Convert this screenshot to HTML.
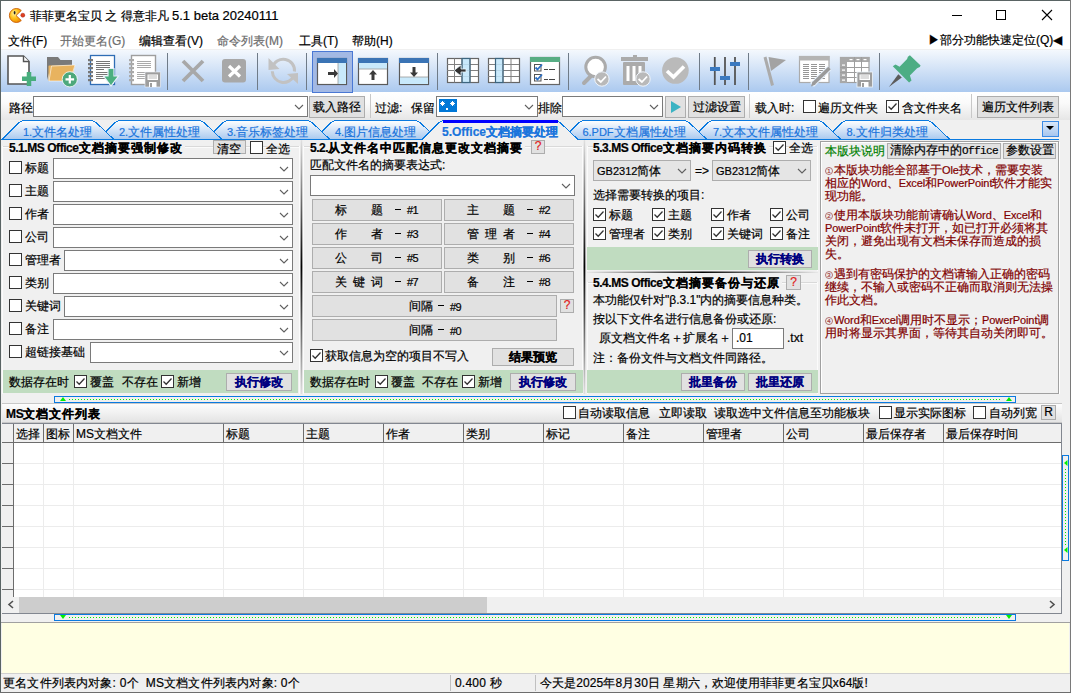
<!DOCTYPE html><html><head><meta charset="utf-8"><style>
*{margin:0;padding:0;box-sizing:border-box}
html,body{width:1071px;height:693px;overflow:hidden;background:#f0f0f0}
body{position:relative;font-family:"Liberation Sans",sans-serif;font-size:12px;color:#000}
div{position:absolute}
.t{line-height:16px;white-space:nowrap;-webkit-text-stroke:0.2px currentColor}
</style></head><body><div style="left:0px;top:0px;width:1071px;height:693px;background:#f0f0f0"></div><div style="left:1px;top:1px;width:1069px;height:29px;background:#fff"></div><div style="left:1px;top:30px;width:1069px;height:19px;background:#fff"></div><div style="left:1px;top:49px;width:1069px;height:1px;background:#f0f0f0"></div><div style="left:1px;top:50px;width:1069px;height:42px;background:linear-gradient(#f4f8fd,#abc9ef)"></div><div style="left:1px;top:92px;width:1069px;height:28px;background:linear-gradient(#ffffff,#fafafa 40%,#e6e6e6)"></div><div class="t" style="left:30px;top:8px;color:#000">菲菲更名宝贝 之 得意非凡 <span style="font-size:13px">5.1 beta 20240111</span></div><div class="t" style="left:8px;top:33px;color:#000">文件(F)</div><div class="t" style="left:60px;top:33px;color:#6d6d6d">开始更名(G)</div><div class="t" style="left:139px;top:33px;color:#000">编辑查看(V)</div><div class="t" style="left:217px;top:33px;color:#6d6d6d">命令列表(M)</div><div class="t" style="left:299px;top:33px;color:#000">工具(T)</div><div class="t" style="left:352px;top:33px;color:#000">帮助(H)</div><div class="t" style="left:928px;top:32px;color:#000">▶部分功能快速定位(Q)◀</div><svg style="position:absolute;left:0;top:0" width="1071" height="693"><line x1="952" y1="15.5" x2="962" y2="15.5" stroke="#000" stroke-width="1"/><rect x="996.5" y="10.5" width="9" height="9" fill="none" stroke="#000" stroke-width="1"/><path d="M1042 10 L1052 20 M1052 10 L1042 20" stroke="#000" stroke-width="1.1"/></svg><div class="t" style="left:9px;top:100px;">路径</div><div style="left:33px;top:96px;width:275px;height:21px;background:#fff;border:1px solid #7a7a7a"></div><svg style="position:absolute;left:294px;top:104px" width="10" height="6"><path d="M1 1 L5 5 L9 1" fill="none" stroke="#606060" stroke-width="1.1"/></svg><div style="left:309px;top:96px;width:56px;height:22px;background:#e1e1e1;border:1px solid #adadad"></div><div class="t" style="left:309px;top:96px;width:56px;height:22px;line-height:22px;text-align:center;">载入路径</div><div style="left:370px;top:94px;width:1px;height:24px;background:#c8c8c8"></div><div class="t" style="left:375px;top:100px;">过滤:</div><div class="t" style="left:411px;top:100px;">保留</div><div style="left:436px;top:96px;width:102px;height:21px;background:#fff;border:1px solid #7a7a7a"></div><svg style="position:absolute;left:524px;top:104px" width="10" height="6"><path d="M1 1 L5 5 L9 1" fill="none" stroke="#606060" stroke-width="1.1"/></svg><div style="left:439px;top:99px;width:18px;height:13px;background:#0078d7"></div><svg style="position:absolute;left:0;top:0" width="1071" height="693"><g stroke="#fff" stroke-width="1"><path d="M442.5 101 V106 M440 103.5 H445 M440.8 101.8 L444.2 105.2 M444.2 101.8 L440.8 105.2"/><path d="M452.5 101 V106 M450 103.5 H455 M450.8 101.8 L454.2 105.2 M454.2 101.8 L450.8 105.2"/></g><rect x="446" y="108" width="2" height="2" fill="#fff"/></svg><div class="t" style="left:538px;top:100px;">排除</div><div style="left:562px;top:96px;width:101px;height:21px;background:#fff;border:1px solid #7a7a7a"></div><svg style="position:absolute;left:649px;top:104px" width="10" height="6"><path d="M1 1 L5 5 L9 1" fill="none" stroke="#606060" stroke-width="1.1"/></svg><div style="left:665px;top:96px;width:21px;height:22px;background:#e1e1e1;border:1px solid #adadad"></div><svg style="position:absolute;left:669px;top:100px" width="14" height="14"><path d="M2 1 L12 7 L2 13 Z" fill="#3bb3c3"/></svg><div style="left:688px;top:96px;width:57px;height:22px;background:#e1e1e1;border:1px solid #adadad"></div><div class="t" style="left:688px;top:96px;width:57px;height:22px;line-height:22px;text-align:center;">过滤设置</div><div style="left:749px;top:94px;width:1px;height:24px;background:#c8c8c8"></div><div class="t" style="left:755px;top:100px;">载入时:</div><div style="left:803px;top:100px;width:13px;height:13px;background:#fff;border:1px solid #333"></div><div class="t" style="left:818px;top:100px;">遍历文件夹</div><div style="left:886px;top:100px;width:13px;height:13px;background:#fff;border:1px solid #333"></div><svg style="position:absolute;left:886px;top:100px" width="13" height="13"><path d="M2.5 6.5 L5.2 9.2 L10.5 3.5" fill="none" stroke="#333" stroke-width="1.3"/></svg><div class="t" style="left:902px;top:100px;">含文件夹名</div><div style="left:971px;top:94px;width:1px;height:24px;background:#c8c8c8"></div><div style="left:977px;top:96px;width:82px;height:22px;background:#e1e1e1;border:1px solid #adadad"></div><div class="t" style="left:977px;top:96px;width:82px;height:22px;line-height:22px;text-align:center;">遍历文件列表</div><div style="left:1px;top:120px;width:1069px;height:20px;background:#f0f0f0"></div><div style="left:1px;top:139px;width:1058px;height:1px;background:#0a7ae0"></div><svg style="position:absolute;left:0;top:0" width="1071" height="693"><defs><linearGradient id="tg" x1="0" y1="0" x2="0" y2="1"><stop offset="0" stop-color="#ffffff"/><stop offset="1" stop-color="#a9c9ef"/></linearGradient></defs><path d="M825 139.5 L841 123.5 Q844 120.5 849 120.5 L925 120.5 Q930 120.5 933 123.5 L950 139.5 Z" fill="url(#tg)" stroke="#0a7ae0" stroke-width="1" shape-rendering="crispEdges"/></svg><div class="t" style="left:845px;top:124px;width:84px;text-align:center;color:#1a74dc;font-weight:normal"><span style="font-size:11px">8.</span>文件归类处理</div><svg style="position:absolute;left:0;top:0" width="1071" height="693"><defs><linearGradient id="tg" x1="0" y1="0" x2="0" y2="1"><stop offset="0" stop-color="#ffffff"/><stop offset="1" stop-color="#a9c9ef"/></linearGradient></defs><path d="M691 139.5 L707 123.5 Q710 120.5 715 120.5 L816 120.5 Q821 120.5 824 123.5 L841 139.5 Z" fill="url(#tg)" stroke="#0a7ae0" stroke-width="1" shape-rendering="crispEdges"/></svg><div class="t" style="left:711px;top:124px;width:109px;text-align:center;color:#1a74dc;font-weight:normal"><span style="font-size:11px">7.</span>文本文件属性处理</div><svg style="position:absolute;left:0;top:0" width="1071" height="693"><defs><linearGradient id="tg" x1="0" y1="0" x2="0" y2="1"><stop offset="0" stop-color="#ffffff"/><stop offset="1" stop-color="#a9c9ef"/></linearGradient></defs><path d="M562 139.5 L578 123.5 Q581 120.5 586 120.5 L682 120.5 Q687 120.5 690 123.5 L707 139.5 Z" fill="url(#tg)" stroke="#0a7ae0" stroke-width="1" shape-rendering="crispEdges"/></svg><div class="t" style="left:582px;top:124px;width:104px;text-align:center;color:#1a74dc;font-weight:normal"><span style="font-size:11px">6.PDF</span>文档属性处理</div><svg style="position:absolute;left:0;top:0" width="1071" height="693"><defs><linearGradient id="tg" x1="0" y1="0" x2="0" y2="1"><stop offset="0" stop-color="#ffffff"/><stop offset="1" stop-color="#a9c9ef"/></linearGradient></defs><path d="M314 139.5 L330 123.5 Q333 120.5 338 120.5 L413 120.5 Q418 120.5 421 123.5 L438 139.5 Z" fill="url(#tg)" stroke="#0a7ae0" stroke-width="1" shape-rendering="crispEdges"/></svg><div class="t" style="left:334px;top:124px;width:83px;text-align:center;color:#1a74dc;font-weight:normal"><span style="font-size:11px">4.</span>图片信息处理</div><svg style="position:absolute;left:0;top:0" width="1071" height="693"><defs><linearGradient id="tg" x1="0" y1="0" x2="0" y2="1"><stop offset="0" stop-color="#ffffff"/><stop offset="1" stop-color="#a9c9ef"/></linearGradient></defs><path d="M206 139.5 L222 123.5 Q225 120.5 230 120.5 L305 120.5 Q310 120.5 313 123.5 L330 139.5 Z" fill="url(#tg)" stroke="#0a7ae0" stroke-width="1" shape-rendering="crispEdges"/></svg><div class="t" style="left:226px;top:124px;width:83px;text-align:center;color:#1a74dc;font-weight:normal"><span style="font-size:11px">3.</span>音乐标签处理</div><svg style="position:absolute;left:0;top:0" width="1071" height="693"><defs><linearGradient id="tg" x1="0" y1="0" x2="0" y2="1"><stop offset="0" stop-color="#ffffff"/><stop offset="1" stop-color="#a9c9ef"/></linearGradient></defs><path d="M98 139.5 L114 123.5 Q117 120.5 122 120.5 L197 120.5 Q202 120.5 205 123.5 L222 139.5 Z" fill="url(#tg)" stroke="#0a7ae0" stroke-width="1" shape-rendering="crispEdges"/></svg><div class="t" style="left:118px;top:124px;width:83px;text-align:center;color:#1a74dc;font-weight:normal"><span style="font-size:11px">2.</span>文件属性处理</div><svg style="position:absolute;left:0;top:0" width="1071" height="693"><defs><linearGradient id="tg" x1="0" y1="0" x2="0" y2="1"><stop offset="0" stop-color="#ffffff"/><stop offset="1" stop-color="#a9c9ef"/></linearGradient></defs><path d="M2 139.5 L18 123.5 Q21 120.5 26 120.5 L89 120.5 Q94 120.5 97 123.5 L114 139.5 Z" fill="url(#tg)" stroke="#0a7ae0" stroke-width="1" shape-rendering="crispEdges"/></svg><div class="t" style="left:22px;top:124px;width:71px;text-align:center;color:#1a74dc;font-weight:normal"><span style="font-size:11px">1.</span>文件名处理</div><svg style="position:absolute;left:0;top:0" width="1071" height="693"><path d="M422 141 L438 123.5 L561 123.5 L578 141 Z" fill="#f0f0f0"/><path d="M422 139.5 L438 123.5 Q441 120.5 446 120.5 L553 120.5 Q558 120.5 561 123.5 L578 139.5" fill="#f0f0f0" stroke="#0a7ae0" stroke-width="1" shape-rendering="crispEdges"/><path d="M443 121.5 L558 121.5" stroke="#0000ff" stroke-width="3"/></svg><div class="t" style="left:442px;top:124px;width:115px;text-align:center;color:#1a74dc;font-weight:bold">5.Office文档摘要处理</div><div style="left:1042px;top:121px;width:17px;height:16px;background:linear-gradient(#d9e8fa,#a7c6ee);border:1px solid #3b8be6"></div><svg style="position:absolute;left:1046px;top:126px" width="9" height="6"><path d="M0 0 L8 0 L4 4 Z" fill="#000"/></svg><div style="left:1px;top:140px;width:1069px;height:256px;background:#f0f0f0"></div><div style="left:2px;top:146px;width:298px;height:1px;background:#d9d9d9"></div><div style="left:2px;top:147px;width:298px;height:1px;background:#fbfbfb"></div><div style="left:2px;top:146px;width:1px;height:248px;background:#fbfbfb"></div><div style="left:299px;top:146px;width:1px;height:248px;background:#fbfbfb"></div><div style="left:300px;top:140px;width:1px;height:254px;background:linear-gradient(#e6e6e6,#8a8a8a 25%,#000 50%,#8a8a8a 75%,#e6e6e6);opacity:0.45"></div><div style="left:301px;top:140px;width:1px;height:254px;background:linear-gradient(#e0e0e0,#6a6a6a 25%,#000 50%,#6a6a6a 75%,#e0e0e0)"></div><div style="left:302px;top:140px;width:1px;height:254px;background:linear-gradient(#e6e6e6,#8a8a8a 25%,#000 50%,#8a8a8a 75%,#e6e6e6);opacity:0.35"></div><div style="left:583px;top:140px;width:1px;height:254px;background:linear-gradient(#e6e6e6,#8a8a8a 25%,#000 50%,#8a8a8a 75%,#e6e6e6);opacity:0.45"></div><div style="left:584px;top:140px;width:1px;height:254px;background:linear-gradient(#e0e0e0,#6a6a6a 25%,#000 50%,#6a6a6a 75%,#e0e0e0)"></div><div style="left:585px;top:140px;width:1px;height:254px;background:linear-gradient(#e6e6e6,#8a8a8a 25%,#000 50%,#8a8a8a 75%,#e6e6e6);opacity:0.35"></div><div class="t" style="left:9px;top:140px;font-weight:bold;background:#f0f0f0;padding-right:2px;"><span style="letter-spacing:-0.45px">5.1.MS Office</span><span style="letter-spacing:1px">文档摘要强制修改</span></div><div style="left:213px;top:140px;width:33px;height:14px;background:#e1e1e1;border:1px solid #adadad"></div><div class="t" style="left:217px;top:141px;">清空</div><div style="left:250px;top:141px;width:13px;height:13px;background:#fff;border:1px solid #333"></div><div class="t" style="left:266px;top:141px;">全选</div><div style="left:9px;top:161px;width:13px;height:13px;background:#fff;border:1px solid #333"></div><div class="t" style="left:25px;top:160px;">标题</div><div style="left:53px;top:158px;width:240px;height:21px;background:#fff;border:1px solid #7a7a7a"></div><svg style="position:absolute;left:279px;top:166px" width="10" height="6"><path d="M1 1 L5 5 L9 1" fill="none" stroke="#606060" stroke-width="1.1"/></svg><div style="left:9px;top:184px;width:13px;height:13px;background:#fff;border:1px solid #333"></div><div class="t" style="left:25px;top:183px;">主题</div><div style="left:53px;top:181px;width:240px;height:21px;background:#fff;border:1px solid #7a7a7a"></div><svg style="position:absolute;left:279px;top:189px" width="10" height="6"><path d="M1 1 L5 5 L9 1" fill="none" stroke="#606060" stroke-width="1.1"/></svg><div style="left:9px;top:207px;width:13px;height:13px;background:#fff;border:1px solid #333"></div><div class="t" style="left:25px;top:206px;">作者</div><div style="left:53px;top:204px;width:240px;height:21px;background:#fff;border:1px solid #7a7a7a"></div><svg style="position:absolute;left:279px;top:212px" width="10" height="6"><path d="M1 1 L5 5 L9 1" fill="none" stroke="#606060" stroke-width="1.1"/></svg><div style="left:9px;top:230px;width:13px;height:13px;background:#fff;border:1px solid #333"></div><div class="t" style="left:25px;top:229px;">公司</div><div style="left:53px;top:227px;width:240px;height:21px;background:#fff;border:1px solid #7a7a7a"></div><svg style="position:absolute;left:279px;top:235px" width="10" height="6"><path d="M1 1 L5 5 L9 1" fill="none" stroke="#606060" stroke-width="1.1"/></svg><div style="left:9px;top:253px;width:13px;height:13px;background:#fff;border:1px solid #333"></div><div class="t" style="left:25px;top:252px;">管理者</div><div style="left:64px;top:250px;width:229px;height:21px;background:#fff;border:1px solid #7a7a7a"></div><svg style="position:absolute;left:279px;top:258px" width="10" height="6"><path d="M1 1 L5 5 L9 1" fill="none" stroke="#606060" stroke-width="1.1"/></svg><div style="left:9px;top:276px;width:13px;height:13px;background:#fff;border:1px solid #333"></div><div class="t" style="left:25px;top:275px;">类别</div><div style="left:53px;top:273px;width:240px;height:21px;background:#fff;border:1px solid #7a7a7a"></div><svg style="position:absolute;left:279px;top:281px" width="10" height="6"><path d="M1 1 L5 5 L9 1" fill="none" stroke="#606060" stroke-width="1.1"/></svg><div style="left:9px;top:299px;width:13px;height:13px;background:#fff;border:1px solid #333"></div><div class="t" style="left:25px;top:298px;">关键词</div><div style="left:64px;top:296px;width:229px;height:21px;background:#fff;border:1px solid #7a7a7a"></div><svg style="position:absolute;left:279px;top:304px" width="10" height="6"><path d="M1 1 L5 5 L9 1" fill="none" stroke="#606060" stroke-width="1.1"/></svg><div style="left:9px;top:322px;width:13px;height:13px;background:#fff;border:1px solid #333"></div><div class="t" style="left:25px;top:321px;">备注</div><div style="left:53px;top:319px;width:240px;height:21px;background:#fff;border:1px solid #7a7a7a"></div><svg style="position:absolute;left:279px;top:327px" width="10" height="6"><path d="M1 1 L5 5 L9 1" fill="none" stroke="#606060" stroke-width="1.1"/></svg><div style="left:9px;top:345px;width:13px;height:13px;background:#fff;border:1px solid #333"></div><div class="t" style="left:25px;top:344px;">超链接基础</div><div style="left:90px;top:342px;width:203px;height:21px;background:#fff;border:1px solid #7a7a7a"></div><svg style="position:absolute;left:279px;top:350px" width="10" height="6"><path d="M1 1 L5 5 L9 1" fill="none" stroke="#606060" stroke-width="1.1"/></svg><div style="left:3px;top:370px;width:295px;height:23px;background:#c0dcc0"></div><div class="t" style="left:9px;top:374px;">数据存在时</div><div style="left:74px;top:375px;width:13px;height:13px;background:#fff;border:1px solid #333"></div><svg style="position:absolute;left:74px;top:375px" width="13" height="13"><path d="M2.5 6.5 L5.2 9.2 L10.5 3.5" fill="none" stroke="#333" stroke-width="1.3"/></svg><div class="t" style="left:90px;top:374px;">覆盖</div><div class="t" style="left:122px;top:374px;">不存在</div><div style="left:161px;top:375px;width:13px;height:13px;background:#fff;border:1px solid #333"></div><svg style="position:absolute;left:161px;top:375px" width="13" height="13"><path d="M2.5 6.5 L5.2 9.2 L10.5 3.5" fill="none" stroke="#333" stroke-width="1.3"/></svg><div class="t" style="left:177px;top:374px;">新增</div><div style="left:226px;top:373px;width:66px;height:18px;background:#e1e1e1;border:1px solid #adadad"></div><div class="t" style="left:226px;top:373px;width:66px;height:18px;line-height:18px;text-align:center;color:#000080;font-weight:bold">执行修改</div><div style="left:303px;top:146px;width:280px;height:1px;background:#d9d9d9"></div><div style="left:303px;top:147px;width:280px;height:1px;background:#fbfbfb"></div><div style="left:303px;top:146px;width:1px;height:248px;background:#fbfbfb"></div><div style="left:582px;top:146px;width:1px;height:248px;background:#fbfbfb"></div><div class="t" style="left:310px;top:140px;font-weight:bold;background:#f0f0f0;padding-right:2px;"><span style="letter-spacing:-0.45px">5.2.</span><span style="letter-spacing:1px">从文件名中匹配信息更改文档摘要</span></div><div style="left:531px;top:140px;width:14px;height:14px;background:#e1e1e1;border:1px solid #adadad"></div><div class="t" style="left:531px;top:140px;width:14px;height:14px;line-height:14px;text-align:center;color:#e02020;line-height:13px">?</div><div class="t" style="left:310px;top:157px;">匹配文件名的摘要表达式:</div><div style="left:310px;top:175px;width:265px;height:21px;background:#fff;border:1px solid #7a7a7a"></div><svg style="position:absolute;left:561px;top:183px" width="10" height="6"><path d="M1 1 L5 5 L9 1" fill="none" stroke="#606060" stroke-width="1.1"/></svg><div style="left:312px;top:199px;width:130px;height:22px;background:#e1e1e1;border:1px solid #adadad"></div><div style="left:444px;top:199px;width:130px;height:22px;background:#e1e1e1;border:1px solid #adadad"></div><div class="t" style="left:335px;top:202px;">标</div><div class="t" style="left:371px;top:202px;">题</div><div style="left:395px;top:209px;width:6px;height:1px;background:#000"></div><div class="t" style="left:407px;top:202px;font-size:11px;letter-spacing:-0.5px">#1</div><div class="t" style="left:467px;top:202px;">主</div><div class="t" style="left:503px;top:202px;">题</div><div style="left:527px;top:209px;width:6px;height:1px;background:#000"></div><div class="t" style="left:539px;top:202px;font-size:11px;letter-spacing:-0.5px">#2</div><div style="left:312px;top:223px;width:130px;height:22px;background:#e1e1e1;border:1px solid #adadad"></div><div style="left:444px;top:223px;width:130px;height:22px;background:#e1e1e1;border:1px solid #adadad"></div><div class="t" style="left:335px;top:226px;">作</div><div class="t" style="left:371px;top:226px;">者</div><div style="left:395px;top:233px;width:6px;height:1px;background:#000"></div><div class="t" style="left:407px;top:226px;font-size:11px;letter-spacing:-0.5px">#3</div><div class="t" style="left:467px;top:226px;">管</div><div class="t" style="left:485px;top:226px;">理</div><div class="t" style="left:503px;top:226px;">者</div><div style="left:527px;top:233px;width:6px;height:1px;background:#000"></div><div class="t" style="left:539px;top:226px;font-size:11px;letter-spacing:-0.5px">#4</div><div style="left:312px;top:247px;width:130px;height:22px;background:#e1e1e1;border:1px solid #adadad"></div><div style="left:444px;top:247px;width:130px;height:22px;background:#e1e1e1;border:1px solid #adadad"></div><div class="t" style="left:335px;top:250px;">公</div><div class="t" style="left:371px;top:250px;">司</div><div style="left:395px;top:257px;width:6px;height:1px;background:#000"></div><div class="t" style="left:407px;top:250px;font-size:11px;letter-spacing:-0.5px">#5</div><div class="t" style="left:467px;top:250px;">类</div><div class="t" style="left:503px;top:250px;">别</div><div style="left:527px;top:257px;width:6px;height:1px;background:#000"></div><div class="t" style="left:539px;top:250px;font-size:11px;letter-spacing:-0.5px">#6</div><div style="left:312px;top:271px;width:130px;height:22px;background:#e1e1e1;border:1px solid #adadad"></div><div style="left:444px;top:271px;width:130px;height:22px;background:#e1e1e1;border:1px solid #adadad"></div><div class="t" style="left:335px;top:274px;">关</div><div class="t" style="left:353px;top:274px;">键</div><div class="t" style="left:371px;top:274px;">词</div><div style="left:395px;top:281px;width:6px;height:1px;background:#000"></div><div class="t" style="left:407px;top:274px;font-size:11px;letter-spacing:-0.5px">#7</div><div class="t" style="left:467px;top:274px;">备</div><div class="t" style="left:503px;top:274px;">注</div><div style="left:527px;top:281px;width:6px;height:1px;background:#000"></div><div class="t" style="left:539px;top:274px;font-size:11px;letter-spacing:-0.5px">#8</div><div style="left:312px;top:295px;width:245px;height:22px;background:#e1e1e1;border:1px solid #adadad"></div><div style="left:312px;top:319px;width:245px;height:22px;background:#e1e1e1;border:1px solid #adadad"></div><div class="t" style="left:409px;top:298px;">间</div><div class="t" style="left:421px;top:298px;">隔</div><div style="left:438px;top:305px;width:6px;height:1px;background:#000"></div><div class="t" style="left:450px;top:299px;font-size:11px;letter-spacing:-0.5px">#9</div><div class="t" style="left:409px;top:322px;">间</div><div class="t" style="left:421px;top:322px;">隔</div><div style="left:438px;top:329px;width:6px;height:1px;background:#000"></div><div class="t" style="left:450px;top:323px;font-size:11px;letter-spacing:-0.5px">#0</div><div style="left:560px;top:299px;width:14px;height:14px;background:#e1e1e1;border:1px solid #adadad"></div><div class="t" style="left:560px;top:299px;width:14px;height:14px;line-height:14px;text-align:center;color:#e02020;line-height:13px">?</div><div style="left:310px;top:349px;width:13px;height:13px;background:#fff;border:1px solid #333"></div><svg style="position:absolute;left:310px;top:349px" width="13" height="13"><path d="M2.5 6.5 L5.2 9.2 L10.5 3.5" fill="none" stroke="#333" stroke-width="1.3"/></svg><div class="t" style="left:325px;top:348px;">获取信息为空的项目不写入</div><div style="left:492px;top:348px;width:82px;height:18px;background:#e1e1e1;border:1px solid #adadad"></div><div class="t" style="left:492px;top:348px;width:82px;height:18px;line-height:18px;text-align:center;font-weight:bold">结果预览</div><div style="left:304px;top:370px;width:279px;height:23px;background:#c0dcc0"></div><div class="t" style="left:310px;top:374px;">数据存在时</div><div style="left:375px;top:375px;width:13px;height:13px;background:#fff;border:1px solid #333"></div><svg style="position:absolute;left:375px;top:375px" width="13" height="13"><path d="M2.5 6.5 L5.2 9.2 L10.5 3.5" fill="none" stroke="#333" stroke-width="1.3"/></svg><div class="t" style="left:391px;top:374px;">覆盖</div><div class="t" style="left:422px;top:374px;">不存在</div><div style="left:462px;top:375px;width:13px;height:13px;background:#fff;border:1px solid #333"></div><svg style="position:absolute;left:462px;top:375px" width="13" height="13"><path d="M2.5 6.5 L5.2 9.2 L10.5 3.5" fill="none" stroke="#333" stroke-width="1.3"/></svg><div class="t" style="left:478px;top:374px;">新增</div><div style="left:510px;top:373px;width:66px;height:18px;background:#e1e1e1;border:1px solid #adadad"></div><div class="t" style="left:510px;top:373px;width:66px;height:18px;line-height:18px;text-align:center;color:#000080;font-weight:bold">执行修改</div><div style="left:587px;top:146px;width:231px;height:1px;background:#d9d9d9"></div><div style="left:587px;top:147px;width:231px;height:1px;background:#fbfbfb"></div><div style="left:587px;top:146px;width:1px;height:125px;background:#fbfbfb"></div><div style="left:817px;top:146px;width:1px;height:125px;background:#fbfbfb"></div><div class="t" style="left:593px;top:140px;font-weight:bold;background:#f0f0f0;padding-right:2px;"><span style="letter-spacing:-0.45px">5.3.MS Office</span><span style="letter-spacing:1px">文档摘要内码转换</span></div><div style="left:773px;top:141px;width:13px;height:13px;background:#fff;border:1px solid #333"></div><svg style="position:absolute;left:773px;top:141px" width="13" height="13"><path d="M2.5 6.5 L5.2 9.2 L10.5 3.5" fill="none" stroke="#333" stroke-width="1.3"/></svg><div class="t" style="left:789px;top:140px;">全选</div><div style="left:593px;top:160px;width:98px;height:21px;background:#e5e5e5;border:1px solid #adadad"></div><svg style="position:absolute;left:677px;top:168px" width="10" height="6"><path d="M1 1 L5 5 L9 1" fill="none" stroke="#606060" stroke-width="1.1"/></svg><div class="t" style="left:597px;top:163px;"><span style="font-size:11px">GB2312</span>简体</div><div class="t" style="left:695px;top:163px;">=></div><div style="left:712px;top:160px;width:99px;height:21px;background:#e5e5e5;border:1px solid #adadad"></div><svg style="position:absolute;left:797px;top:168px" width="10" height="6"><path d="M1 1 L5 5 L9 1" fill="none" stroke="#606060" stroke-width="1.1"/></svg><div class="t" style="left:716px;top:163px;"><span style="font-size:11px">GB2312</span>简体</div><div class="t" style="left:593px;top:187px;">选择需要转换的项目:</div><div style="left:593px;top:208px;width:13px;height:13px;background:#fff;border:1px solid #333"></div><svg style="position:absolute;left:593px;top:208px" width="13" height="13"><path d="M2.5 6.5 L5.2 9.2 L10.5 3.5" fill="none" stroke="#333" stroke-width="1.3"/></svg><div class="t" style="left:609px;top:207px;">标题</div><div style="left:652px;top:208px;width:13px;height:13px;background:#fff;border:1px solid #333"></div><svg style="position:absolute;left:652px;top:208px" width="13" height="13"><path d="M2.5 6.5 L5.2 9.2 L10.5 3.5" fill="none" stroke="#333" stroke-width="1.3"/></svg><div class="t" style="left:668px;top:207px;">主题</div><div style="left:711px;top:208px;width:13px;height:13px;background:#fff;border:1px solid #333"></div><svg style="position:absolute;left:711px;top:208px" width="13" height="13"><path d="M2.5 6.5 L5.2 9.2 L10.5 3.5" fill="none" stroke="#333" stroke-width="1.3"/></svg><div class="t" style="left:727px;top:207px;">作者</div><div style="left:770px;top:208px;width:13px;height:13px;background:#fff;border:1px solid #333"></div><svg style="position:absolute;left:770px;top:208px" width="13" height="13"><path d="M2.5 6.5 L5.2 9.2 L10.5 3.5" fill="none" stroke="#333" stroke-width="1.3"/></svg><div class="t" style="left:786px;top:207px;">公司</div><div style="left:593px;top:227px;width:13px;height:13px;background:#fff;border:1px solid #333"></div><svg style="position:absolute;left:593px;top:227px" width="13" height="13"><path d="M2.5 6.5 L5.2 9.2 L10.5 3.5" fill="none" stroke="#333" stroke-width="1.3"/></svg><div class="t" style="left:609px;top:226px;">管理者</div><div style="left:652px;top:227px;width:13px;height:13px;background:#fff;border:1px solid #333"></div><svg style="position:absolute;left:652px;top:227px" width="13" height="13"><path d="M2.5 6.5 L5.2 9.2 L10.5 3.5" fill="none" stroke="#333" stroke-width="1.3"/></svg><div class="t" style="left:668px;top:226px;">类别</div><div style="left:711px;top:227px;width:13px;height:13px;background:#fff;border:1px solid #333"></div><svg style="position:absolute;left:711px;top:227px" width="13" height="13"><path d="M2.5 6.5 L5.2 9.2 L10.5 3.5" fill="none" stroke="#333" stroke-width="1.3"/></svg><div class="t" style="left:727px;top:226px;">关键词</div><div style="left:770px;top:227px;width:13px;height:13px;background:#fff;border:1px solid #333"></div><svg style="position:absolute;left:770px;top:227px" width="13" height="13"><path d="M2.5 6.5 L5.2 9.2 L10.5 3.5" fill="none" stroke="#333" stroke-width="1.3"/></svg><div class="t" style="left:786px;top:226px;">备注</div><div style="left:587px;top:247px;width:231px;height:23px;background:#c0dcc0"></div><div style="left:748px;top:250px;width:64px;height:18px;background:#e1e1e1;border:1px solid #adadad"></div><div class="t" style="left:748px;top:250px;width:64px;height:18px;line-height:18px;text-align:center;color:#000080;font-weight:bold">执行转换</div><div style="left:587px;top:271px;width:231px;height:1px;background:linear-gradient(90deg,#f0f0f0,#999 25%,#222 50%,#999 75%,#f0f0f0);opacity:0.6"></div><div style="left:587px;top:272px;width:231px;height:1px;background:linear-gradient(90deg,#e8e8e8,#777 25%,#000 50%,#777 75%,#e8e8e8)"></div><div style="left:587px;top:282px;width:231px;height:1px;background:#d9d9d9"></div><div style="left:587px;top:283px;width:231px;height:1px;background:#fbfbfb"></div><div style="left:587px;top:282px;width:1px;height:112px;background:#fbfbfb"></div><div style="left:817px;top:282px;width:1px;height:112px;background:#fbfbfb"></div><div class="t" style="left:593px;top:275px;font-weight:bold;background:#f0f0f0;padding-right:2px;"><span style="letter-spacing:-0.45px">5.4.MS Office</span><span style="letter-spacing:1px">文档摘要备份与还原</span></div><div style="left:786px;top:275px;width:15px;height:15px;background:#e1e1e1;border:1px solid #adadad"></div><div class="t" style="left:786px;top:275px;width:15px;height:15px;line-height:15px;text-align:center;color:#e02020;line-height:14px">?</div><div class="t" style="left:593px;top:292px;">本功能仅针对"β.3.1"内的摘要信息种类。</div><div class="t" style="left:593px;top:311px;">按以下文件名进行信息备份或还原:</div><div class="t" style="left:599px;top:330px;">原文档文件名＋扩展名＋</div><div style="left:732px;top:328px;width:52px;height:21px;background:#fff;border:1px solid #7a7a7a"></div><div class="t" style="left:736px;top:330px;">.01</div><div class="t" style="left:787px;top:330px;">.txt</div><div class="t" style="left:593px;top:350px;">注：备份文件与文档文件同路径。</div><div style="left:587px;top:370px;width:231px;height:23px;background:#c0dcc0"></div><div style="left:681px;top:373px;width:64px;height:18px;background:#e1e1e1;border:1px solid #adadad"></div><div class="t" style="left:681px;top:373px;width:64px;height:18px;line-height:18px;text-align:center;color:#000080;font-weight:bold">批里备份</div><div style="left:748px;top:373px;width:64px;height:18px;background:#e1e1e1;border:1px solid #adadad"></div><div class="t" style="left:748px;top:373px;width:64px;height:18px;line-height:18px;text-align:center;color:#000080;font-weight:bold">批里还原</div><div style="left:820px;top:141px;width:239px;height:253px;border:1px solid #a0a0a0;box-shadow:inset 1px 1px 0 #fff, 1px 1px 0 #fff"></div><div class="t" style="left:825px;top:143px;color:#008000">本版块说明</div><div style="left:887px;top:143px;width:114px;height:16px;background:#e1e1e1;border:1px solid #adadad"></div><div class="t" style="left:887px;top:143px;width:114px;height:16px;line-height:16px;text-align:center;line-height:15px">清除内存中的<span style="font-family:Liberation Mono,monospace;font-size:11px;letter-spacing:-0.6px">Office</span></div><div style="left:1003px;top:143px;width:53px;height:16px;background:#e1e1e1;border:1px solid #adadad"></div><div class="t" style="left:1003px;top:143px;width:53px;height:16px;line-height:16px;text-align:center;line-height:15px">参数设置</div><div class="t" style="left:825px;top:164px;color:#800000;line-height:13px"><span style="display:inline-block;width:8px;height:8px;border:1px solid #b07070;border-radius:50%;font-size:6px;line-height:7px;text-align:center;vertical-align:1px;margin-right:1px;color:#a04040">1</span>本版块功能全部基于<span style="font-size:11px;letter-spacing:-0.1px">Ole</span>技术，需要安装</div><div class="t" style="left:825px;top:177px;color:#800000;line-height:13px">相应的<span style="font-size:11px;letter-spacing:-0.1px">Word</span>、<span style="font-size:11px;letter-spacing:-0.1px">Excel</span>和<span style="font-size:11px;letter-spacing:-0.1px">PowerPoint</span>软件才能实</div><div class="t" style="left:825px;top:190px;color:#800000;line-height:13px">现功能。</div><div class="t" style="left:825px;top:209px;color:#800000;line-height:13px"><span style="display:inline-block;width:8px;height:8px;border:1px solid #b07070;border-radius:50%;font-size:6px;line-height:7px;text-align:center;vertical-align:1px;margin-right:1px;color:#a04040">2</span>使用本版块功能前请确认<span style="font-size:11px;letter-spacing:-0.1px">Word</span>、<span style="font-size:11px;letter-spacing:-0.1px">Excel</span>和</div><div class="t" style="left:825px;top:222px;color:#800000;line-height:13px"><span style="font-size:11px;letter-spacing:-0.1px">PowerPoint</span>软件未打开，如已打开必须将其</div><div class="t" style="left:825px;top:235px;color:#800000;line-height:13px">关闭，避免出现有文档未保存而造成的损</div><div class="t" style="left:825px;top:248px;color:#800000;line-height:13px">失。</div><div class="t" style="left:825px;top:268px;color:#800000;line-height:13px"><span style="display:inline-block;width:8px;height:8px;border:1px solid #b07070;border-radius:50%;font-size:6px;line-height:7px;text-align:center;vertical-align:1px;margin-right:1px;color:#a04040">3</span>遇到有密码保护的文档请输入正确的密码</div><div class="t" style="left:825px;top:281px;color:#800000;line-height:13px">继续，不输入或密码不正确而取消则无法操</div><div class="t" style="left:825px;top:294px;color:#800000;line-height:13px">作此文档。</div><div class="t" style="left:825px;top:314px;color:#800000;line-height:13px"><span style="display:inline-block;width:8px;height:8px;border:1px solid #b07070;border-radius:50%;font-size:6px;line-height:7px;text-align:center;vertical-align:1px;margin-right:1px;color:#a04040">4</span><span style="font-size:11px;letter-spacing:-0.1px">Word</span>和<span style="font-size:11px;letter-spacing:-0.1px">Excel</span>调用时不显示；<span style="font-size:11px;letter-spacing:-0.1px">PowerPoint</span>调</div><div class="t" style="left:825px;top:327px;color:#800000;line-height:13px">用时将显示其界面，等待其自动关闭即可。</div><div style="left:1px;top:394px;width:1069px;height:10px;background:#f0f0f0"></div><div style="left:54px;top:396px;width:962px;height:7px;border:1px solid #0a7ae0;background:#f0f0f0"></div><div style="left:69px;top:399px;width:932px;height:1px;background-image:linear-gradient(90deg,#00f000 1px,transparent 1px);background-size:3px 1px"></div><svg style="position:absolute;left:60px;top:397px" width="7" height="5"><path d="M0 4 L3 0 L6 4 Z" fill="#00f000"/></svg><svg style="position:absolute;left:1006px;top:397px" width="7" height="5"><path d="M0 4 L3 0 L6 4 Z" fill="#00f000"/></svg><div style="left:2px;top:403px;width:1060px;height:20px;background:linear-gradient(#fdfdfd,#e4e4e4);border-top:1px solid #c8c8c8;border-bottom:1px solid #c8c8c8"></div><div class="t" style="left:6px;top:406px;font-weight:bold"><span style="letter-spacing:-0.3px">MS</span><span style="letter-spacing:1px">文档文件列表</span></div><div style="left:563px;top:406px;width:13px;height:13px;background:#fff;border:1px solid #333"></div><div class="t" style="left:578px;top:405px;">自动读取信息</div><div class="t" style="left:659px;top:405px;">立即读取</div><div class="t" style="left:714px;top:405px;">读取选中文件信息至功能板块</div><div style="left:879px;top:406px;width:13px;height:13px;background:#fff;border:1px solid #333"></div><div class="t" style="left:894px;top:405px;">显示实际图标</div><div style="left:973px;top:406px;width:13px;height:13px;background:#fff;border:1px solid #333"></div><div class="t" style="left:989px;top:405px;">自动列宽</div><div style="left:1041px;top:405px;width:15px;height:15px;background:#e1e1e1;border:1px solid #adadad"></div><div class="t" style="left:1041px;top:405px;width:15px;height:15px;line-height:15px;text-align:center;line-height:14px">R</div><div style="left:2px;top:423px;width:1060px;height:191px;background:#fff;border:1px solid #828790;border-left:none"></div><div style="left:2px;top:424px;width:1059px;height:19px;background:#f0f0f0;border-bottom:1px solid #6d6d6d"></div><div style="left:13px;top:424px;width:1px;height:19px;background:#6d6d6d"></div><div class="t" style="left:16px;top:426px;">选择</div><div style="left:43px;top:424px;width:1px;height:19px;background:#6d6d6d"></div><div class="t" style="left:46px;top:426px;">图标</div><div style="left:73px;top:424px;width:1px;height:19px;background:#6d6d6d"></div><div class="t" style="left:76px;top:426px;">MS文档文件</div><div style="left:223px;top:424px;width:1px;height:19px;background:#6d6d6d"></div><div class="t" style="left:226px;top:426px;">标题</div><div style="left:303px;top:424px;width:1px;height:19px;background:#6d6d6d"></div><div class="t" style="left:306px;top:426px;">主题</div><div style="left:383px;top:424px;width:1px;height:19px;background:#6d6d6d"></div><div class="t" style="left:386px;top:426px;">作者</div><div style="left:463px;top:424px;width:1px;height:19px;background:#6d6d6d"></div><div class="t" style="left:466px;top:426px;">类别</div><div style="left:543px;top:424px;width:1px;height:19px;background:#6d6d6d"></div><div class="t" style="left:546px;top:426px;">标记</div><div style="left:623px;top:424px;width:1px;height:19px;background:#6d6d6d"></div><div class="t" style="left:626px;top:426px;">备注</div><div style="left:703px;top:424px;width:1px;height:19px;background:#6d6d6d"></div><div class="t" style="left:706px;top:426px;">管理者</div><div style="left:783px;top:424px;width:1px;height:19px;background:#6d6d6d"></div><div class="t" style="left:786px;top:426px;">公司</div><div style="left:863px;top:424px;width:1px;height:19px;background:#6d6d6d"></div><div class="t" style="left:866px;top:426px;">最后保存者</div><div style="left:943px;top:424px;width:1px;height:19px;background:#6d6d6d"></div><div class="t" style="left:946px;top:426px;">最后保存时间</div><div style="left:2px;top:443px;width:12px;height:154px;background:#f0f0f0"></div><div style="left:13px;top:443px;width:1px;height:154px;background:#6d6d6d"></div><div style="left:2px;top:463px;width:12px;height:1px;background:#6d6d6d"></div><div style="left:14px;top:463px;width:1047px;height:1px;background:#ececec"></div><div style="left:2px;top:484px;width:12px;height:1px;background:#6d6d6d"></div><div style="left:14px;top:484px;width:1047px;height:1px;background:#ececec"></div><div style="left:2px;top:505px;width:12px;height:1px;background:#6d6d6d"></div><div style="left:14px;top:505px;width:1047px;height:1px;background:#ececec"></div><div style="left:2px;top:526px;width:12px;height:1px;background:#6d6d6d"></div><div style="left:14px;top:526px;width:1047px;height:1px;background:#ececec"></div><div style="left:2px;top:547px;width:12px;height:1px;background:#6d6d6d"></div><div style="left:14px;top:547px;width:1047px;height:1px;background:#ececec"></div><div style="left:2px;top:568px;width:12px;height:1px;background:#6d6d6d"></div><div style="left:14px;top:568px;width:1047px;height:1px;background:#ececec"></div><div style="left:2px;top:589px;width:12px;height:1px;background:#6d6d6d"></div><div style="left:14px;top:589px;width:1047px;height:1px;background:#ececec"></div><div style="left:43px;top:443px;width:1px;height:154px;background:#ececec"></div><div style="left:73px;top:443px;width:1px;height:154px;background:#ececec"></div><div style="left:223px;top:443px;width:1px;height:154px;background:#ececec"></div><div style="left:303px;top:443px;width:1px;height:154px;background:#ececec"></div><div style="left:383px;top:443px;width:1px;height:154px;background:#ececec"></div><div style="left:463px;top:443px;width:1px;height:154px;background:#ececec"></div><div style="left:543px;top:443px;width:1px;height:154px;background:#ececec"></div><div style="left:623px;top:443px;width:1px;height:154px;background:#ececec"></div><div style="left:703px;top:443px;width:1px;height:154px;background:#ececec"></div><div style="left:783px;top:443px;width:1px;height:154px;background:#ececec"></div><div style="left:863px;top:443px;width:1px;height:154px;background:#ececec"></div><div style="left:943px;top:443px;width:1px;height:154px;background:#ececec"></div><div style="left:2px;top:597px;width:1059px;height:16px;background:#f0f0f0"></div><div style="left:19px;top:597px;width:468px;height:16px;background:#cdcdcd"></div><svg style="position:absolute;left:0;top:0" width="1071" height="693"><path d="M13 601 L9 604.5 L13 608" fill="none" stroke="#505050" stroke-width="1.6"/><path d="M1050 601 L1054 604.5 L1050 608" fill="none" stroke="#505050" stroke-width="1.6"/></svg><div style="left:1062px;top:455px;width:7px;height:106px;border:1px solid #0a7ae0"></div><svg style="position:absolute;left:1064px;top:460px" width="4" height="6"><path d="M3.5 0 L0 3 L3.5 6 Z" fill="#00f000"/></svg><svg style="position:absolute;left:1064px;top:547px" width="4" height="6"><path d="M3.5 0 L0 3 L3.5 6 Z" fill="#00f000"/></svg><div style="left:1065px;top:469px;width:1px;height:76px;background-image:linear-gradient(#00f000 1px,transparent 1px);background-size:1px 3px"></div><div style="left:1066px;top:682px;width:2px;height:2px;background:#b0b0b0"></div><div style="left:1063px;top:685px;width:2px;height:2px;background:#b0b0b0"></div><div style="left:1066px;top:685px;width:2px;height:2px;background:#b0b0b0"></div><div style="left:1060px;top:688px;width:2px;height:2px;background:#b0b0b0"></div><div style="left:1063px;top:688px;width:2px;height:2px;background:#b0b0b0"></div><div style="left:1066px;top:688px;width:2px;height:2px;background:#b0b0b0"></div><div style="left:54px;top:614px;width:962px;height:7px;border:1px solid #0a7ae0;background:#f0f0f0"></div><div style="left:69px;top:617px;width:932px;height:1px;background-image:linear-gradient(90deg,#00f000 1px,transparent 1px);background-size:3px 1px"></div><svg style="position:absolute;left:60px;top:615px" width="7" height="5"><path d="M0 0 L6 0 L3 4 Z" fill="#00f000"/></svg><svg style="position:absolute;left:1006px;top:615px" width="7" height="5"><path d="M0 0 L6 0 L3 4 Z" fill="#00f000"/></svg><div style="left:1px;top:622px;width:1069px;height:1px;background:#a0a0a0"></div><div style="left:2px;top:623px;width:1067px;height:50px;background:#ffffe3"></div><div style="left:1px;top:673px;width:1069px;height:1px;background:#d0d0d0"></div><div style="left:1px;top:674px;width:1069px;height:18px;background:#f0f0f0"></div><div class="t" style="left:3px;top:675px;letter-spacing:0.18px">更名文件列表内对象: 0个&nbsp;&nbsp;MS文档文件列表内对象: 0个</div><div style="left:450px;top:675px;width:1px;height:16px;background:#c0c0c0"></div><div class="t" style="left:455px;top:675px;letter-spacing:0.2px">0.400 秒</div><div style="left:535px;top:675px;width:1px;height:16px;background:#c0c0c0"></div><div class="t" style="left:540px;top:675px;letter-spacing:0.1px">今天是2025年8月30日 星期六，欢迎使用菲菲更名宝贝x64版!</div><svg style="position:absolute;left:0;top:0" width="1071" height="693"><line x1="167.5" y1="53" x2="167.5" y2="90" stroke="#6f7b88" stroke-width="1"/><line x1="257.5" y1="53" x2="257.5" y2="90" stroke="#6f7b88" stroke-width="1"/><line x1="306.5" y1="53" x2="306.5" y2="90" stroke="#6f7b88" stroke-width="1"/><line x1="437.5" y1="53" x2="437.5" y2="90" stroke="#6f7b88" stroke-width="1"/><line x1="568.5" y1="53" x2="568.5" y2="90" stroke="#6f7b88" stroke-width="1"/><line x1="699.5" y1="53" x2="699.5" y2="90" stroke="#6f7b88" stroke-width="1"/><line x1="748.5" y1="53" x2="748.5" y2="90" stroke="#6f7b88" stroke-width="1"/><line x1="879.5" y1="53" x2="879.5" y2="90" stroke="#6f7b88" stroke-width="1"/><path d="M8 56 L23.5 56 L29 61.5 L29 84 L8 84 Z" fill="#fff" stroke="#555" stroke-width="1.6"/><path d="M23.5 56 L23.5 61.5 L29 61.5" fill="#fff" stroke="#555" stroke-width="1.4"/><rect x="21.5" y="70" width="15" height="17" fill="none"/><path d="M29 72 L29 86 M22 78.8 L36 78.8" stroke="#48ad7d" stroke-width="4.5"/><path d="M47 80 L47 57 L58 57 L60.5 60 L72 60 L72 66 L51 66 Z" fill="#7a7a7a"/><path d="M48.5 66 L49 65.5 L75 65 L71 81 L48.5 81 Z" fill="#e8b35f"/><path d="M51.5 66 L75 65 L70 81 L49 81 Z" fill="#e8b35f" stroke="#fff" stroke-width="0.6"/><circle cx="69.8" cy="79.3" r="7.6" fill="#4ca87c" stroke="#fff" stroke-width="0.8"/><path d="M69.8 75 L69.8 83.6 M65.5 79.3 L74.1 79.3" stroke="#fff" stroke-width="2.2"/><rect x="90.5" y="55.5" width="24" height="29" fill="#fff" stroke="#2f6db5" stroke-width="1.3"/><rect x="88" y="59" width="5" height="2.2" fill="#777"/><rect x="88" y="63" width="5" height="2.2" fill="#777"/><rect x="88" y="67" width="5" height="2.2" fill="#777"/><rect x="88" y="71" width="5" height="2.2" fill="#777"/><rect x="88" y="75" width="5" height="2.2" fill="#777"/><rect x="88" y="79" width="5" height="2.2" fill="#777"/><line x1="96" y1="61.5" x2="110" y2="61.5" stroke="#777" stroke-width="1"/><line x1="96" y1="63.5" x2="110" y2="63.5" stroke="#777" stroke-width="1"/><line x1="96" y1="65.5" x2="110" y2="65.5" stroke="#777" stroke-width="1"/><line x1="96" y1="67.5" x2="110" y2="67.5" stroke="#777" stroke-width="1"/><line x1="96" y1="72.5" x2="110" y2="72.5" stroke="#777" stroke-width="1"/><line x1="96" y1="74.5" x2="110" y2="74.5" stroke="#777" stroke-width="1"/><line x1="96" y1="76.5" x2="110" y2="76.5" stroke="#777" stroke-width="1"/><line x1="96" y1="78.5" x2="110" y2="78.5" stroke="#777" stroke-width="1"/><line x1="96" y1="69.5" x2="104" y2="69.5" stroke="#777" stroke-width="1"/><path d="M108 68.5 L114 68.5 L114 76 L118.5 76 L111 86 L103.5 76 L108 76 Z" fill="#4caf7f" stroke="#e8f0fa" stroke-width="1.2"/><rect x="131.5" y="55.5" width="24" height="29" fill="#fff" stroke="#9e9e9e" stroke-width="1.4"/><rect x="129" y="59" width="5" height="2.2" fill="#aaa"/><rect x="129" y="63" width="5" height="2.2" fill="#aaa"/><rect x="129" y="67" width="5" height="2.2" fill="#aaa"/><rect x="129" y="71" width="5" height="2.2" fill="#aaa"/><rect x="129" y="75" width="5" height="2.2" fill="#aaa"/><rect x="129" y="79" width="5" height="2.2" fill="#aaa"/><line x1="137" y1="61.5" x2="151" y2="61.5" stroke="#aaa" stroke-width="1"/><line x1="137" y1="63.5" x2="151" y2="63.5" stroke="#aaa" stroke-width="1"/><line x1="137" y1="65.5" x2="151" y2="65.5" stroke="#aaa" stroke-width="1"/><line x1="137" y1="67.5" x2="151" y2="67.5" stroke="#aaa" stroke-width="1"/><line x1="137" y1="72.5" x2="151" y2="72.5" stroke="#aaa" stroke-width="1"/><line x1="137" y1="74.5" x2="151" y2="74.5" stroke="#aaa" stroke-width="1"/><line x1="137" y1="76.5" x2="151" y2="76.5" stroke="#aaa" stroke-width="1"/><line x1="137" y1="78.5" x2="151" y2="78.5" stroke="#aaa" stroke-width="1"/><rect x="145" y="72" width="15.5" height="15" fill="#9e9e9e" stroke="#f2f6fc" stroke-width="0.6"/><rect x="147.5" y="74.5" width="10.5" height="5.5" fill="#fff"/><line x1="148.5" y1="76" x2="157" y2="76" stroke="#aaa" stroke-width="0.8"/><line x1="148.5" y1="78" x2="157" y2="78" stroke="#aaa" stroke-width="0.8"/><rect x="149" y="82" width="7.5" height="5" fill="#fff"/><rect x="150" y="83" width="2" height="4" fill="#9e9e9e"/><path d="M183 61 L203 81 M203 61 L183 81" stroke="#a8a8a8" stroke-width="3.8"/><rect x="222" y="59" width="24" height="23.5" rx="3" fill="#a8a8a8"/><path d="M229 66 L240 76.5 M240 66 L229 76.5" stroke="#fff" stroke-width="3.2"/><path d="M272.5 67 A11.3 11.3 0 0 1 294.5 71.5" fill="none" stroke="#c2c2c2" stroke-width="3"/><path d="M294 75.5 A11.3 11.3 0 0 1 272.3 71.3" fill="none" stroke="#c2c2c2" stroke-width="3"/><path d="M268.5 58 L268.5 70 L279.5 69 Z" fill="#c2c2c2"/><path d="M298 84 L298 73 L287 74 Z" fill="#c2c2c2"/><rect x="312.5" y="51.5" width="40" height="41" fill="#a3b9e4" stroke="#4a78d4" stroke-width="1"/><rect x="317.5" y="58.5" width="29" height="26" fill="#fff" stroke="#5a5a5a" stroke-width="1.2"/><rect x="338" y="63" width="8" height="21" fill="#c9e9fb"/><line x1="338" y1="63" x2="338" y2="84" stroke="#999" stroke-width="0.8"/><path d="M328 72 L334 72 L334 69 L338 73.5 L334 78 L334 75 L328 75 Z" fill="#3a3a3a"/><rect x="317" y="58" width="30" height="5" fill="#3b74b5"/><rect x="358.5" y="58.5" width="29" height="26" fill="#fff" stroke="#5a5a5a" stroke-width="1.2"/><rect x="359" y="63" width="28" height="6" fill="#c9e9fb"/><line x1="359" y1="69" x2="387" y2="69" stroke="#999" stroke-width="0.8"/><path d="M371.5 80 L371.5 74.5 L369 74.5 L373 70 L377 74.5 L374.5 74.5 L374.5 80 Z" fill="#3a3a3a"/><rect x="358" y="58" width="30" height="5" fill="#3b74b5"/><rect x="399.5" y="58.5" width="29" height="26" fill="#fff" stroke="#5a5a5a" stroke-width="1.2"/><rect x="400" y="77" width="28" height="7" fill="#c9e9fb"/><line x1="400" y1="77" x2="428" y2="77" stroke="#999" stroke-width="0.8"/><path d="M412.5 67 L412.5 72.5 L410 72.5 L414 77 L418 72.5 L415.5 72.5 L415.5 67 Z" fill="#3a3a3a"/><rect x="399" y="58" width="30" height="5" fill="#3b74b5"/><rect x="447.5" y="58.5" width="31" height="24" fill="#fff" stroke="#666" stroke-width="1.2"/><rect x="462" y="58.5" width="8" height="24" fill="#c9e9fb"/><line x1="454.5" y1="58.5" x2="454.5" y2="82.5" stroke="#808080" stroke-width="1"/><line x1="462" y1="58.5" x2="462" y2="82.5" stroke="#808080" stroke-width="1"/><line x1="470" y1="58.5" x2="470" y2="82.5" stroke="#808080" stroke-width="1"/><line x1="447" y1="64.5" x2="462" y2="64.5" stroke="#808080" stroke-width="1"/><line x1="462" y1="64.5" x2="470" y2="64.5" stroke="#b8d8ea" stroke-width="1"/><line x1="470" y1="64.5" x2="478" y2="64.5" stroke="#808080" stroke-width="1"/><line x1="447" y1="70.5" x2="462" y2="70.5" stroke="#808080" stroke-width="1"/><line x1="462" y1="70.5" x2="470" y2="70.5" stroke="#b8d8ea" stroke-width="1"/><line x1="470" y1="70.5" x2="478" y2="70.5" stroke="#808080" stroke-width="1"/><line x1="447" y1="76.5" x2="462" y2="76.5" stroke="#808080" stroke-width="1"/><line x1="462" y1="76.5" x2="470" y2="76.5" stroke="#b8d8ea" stroke-width="1"/><line x1="470" y1="76.5" x2="478" y2="76.5" stroke="#808080" stroke-width="1"/><rect x="462" y="58.5" width="8" height="24" fill="none" stroke="#3d6680" stroke-width="1.2"/><path d="M466 69 L461 69 L461 65 L454 70.5 L461 76 L461 72 L466 72 Z" fill="#333" stroke="#eaf6fd" stroke-width="0.8"/><rect x="488.5" y="58.5" width="31" height="24" fill="#fff" stroke="#666" stroke-width="1.2"/><rect x="495.5" y="58.5" width="7.5" height="24" fill="#c9e9fb"/><line x1="495.5" y1="58.5" x2="495.5" y2="82.5" stroke="#808080" stroke-width="1"/><line x1="503" y1="58.5" x2="503" y2="82.5" stroke="#808080" stroke-width="1"/><line x1="511" y1="58.5" x2="511" y2="82.5" stroke="#808080" stroke-width="1"/><line x1="488" y1="64.5" x2="495.5" y2="64.5" stroke="#808080" stroke-width="1"/><line x1="495.5" y1="64.5" x2="503.0" y2="64.5" stroke="#b8d8ea" stroke-width="1"/><line x1="503.0" y1="64.5" x2="519" y2="64.5" stroke="#808080" stroke-width="1"/><line x1="488" y1="70.5" x2="495.5" y2="70.5" stroke="#808080" stroke-width="1"/><line x1="495.5" y1="70.5" x2="503.0" y2="70.5" stroke="#b8d8ea" stroke-width="1"/><line x1="503.0" y1="70.5" x2="519" y2="70.5" stroke="#808080" stroke-width="1"/><line x1="488" y1="76.5" x2="495.5" y2="76.5" stroke="#808080" stroke-width="1"/><line x1="495.5" y1="76.5" x2="503.0" y2="76.5" stroke="#b8d8ea" stroke-width="1"/><line x1="503.0" y1="76.5" x2="519" y2="76.5" stroke="#808080" stroke-width="1"/><rect x="495.5" y="58.5" width="7.5" height="24" fill="none" stroke="#3d6680" stroke-width="1.2"/><rect x="530.5" y="57.5" width="29" height="27" fill="#fff" stroke="#666" stroke-width="1.2"/><rect x="530" y="57" width="30" height="5" fill="#57ad84"/><rect x="534.5" y="64.5" width="6.5" height="6.5" fill="#fff" stroke="#555" stroke-width="1"/><path d="M535.5 67.5 L537.5 69.5 L542 64.5" fill="none" stroke="#2c6fc4" stroke-width="1.8"/><line x1="544" y1="69.5" x2="548" y2="69.5" stroke="#444" stroke-width="1"/><line x1="549" y1="69.5" x2="555" y2="69.5" stroke="#444" stroke-width="1"/><rect x="534.5" y="74.5" width="6.5" height="6.5" fill="#fff" stroke="#555" stroke-width="1"/><path d="M535.5 77.5 L537.5 79.5 L542 74.5" fill="none" stroke="#2c6fc4" stroke-width="1.8"/><line x1="544" y1="79.5" x2="548" y2="79.5" stroke="#444" stroke-width="1"/><line x1="549" y1="79.5" x2="555" y2="79.5" stroke="#444" stroke-width="1"/><circle cx="595.6" cy="67" r="9.8" fill="#fff" stroke="#ababab" stroke-width="3"/><line x1="584" y1="83" x2="590.5" y2="76.5" stroke="#ababab" stroke-width="4" stroke-linecap="round"/><circle cx="601.9" cy="79" r="7.2" fill="#b9b9b9" stroke="#f0f5fb" stroke-width="1"/><path d="M597.5 79 L600.8 82 L606 76.5" fill="none" stroke="#fff" stroke-width="1.8"/><rect x="621" y="57" width="27" height="4" fill="#ababab"/><rect x="633" y="55" width="4" height="3" fill="#ababab"/><rect x="623" y="62" width="22" height="23" rx="1" fill="#ababab"/><rect x="626.5" y="66" width="3" height="15" fill="#fff"/><rect x="632.5" y="66" width="3" height="15" fill="#fff"/><rect x="638.5" y="66" width="3" height="15" fill="#fff"/><circle cx="643" cy="79" r="7.2" fill="#b9b9b9" stroke="#f0f5fb" stroke-width="1"/><path d="M638.6 79 L641.9 82 L647.1 76.5" fill="none" stroke="#fff" stroke-width="1.8"/><circle cx="675.4" cy="70.5" r="13.3" fill="#bababa"/><path d="M667 71 L673.5 77 L684 66.5" fill="none" stroke="#fff" stroke-width="3.6"/><line x1="714.8" y1="57" x2="714.8" y2="85" stroke="#555" stroke-width="1.8"/><line x1="725" y1="57" x2="725" y2="85" stroke="#555" stroke-width="1.8"/><line x1="735" y1="57" x2="735" y2="85" stroke="#555" stroke-width="1.8"/><rect x="710" y="67" width="10" height="4" fill="#3a79c0"/><rect x="720" y="76" width="10" height="4" fill="#3a79c0"/><rect x="730" y="62" width="10" height="4" fill="#3a79c0"/><line x1="765" y1="57" x2="772.5" y2="85.5" stroke="#ababab" stroke-width="3"/><path d="M768.5 57 L786 60 L771 71 Z" fill="#a3a3a3"/><rect x="799.5" y="56.5" width="29.5" height="26" fill="#fff" stroke="#ababab" stroke-width="1.2"/><rect x="799" y="56" width="30.5" height="4.5" fill="#b4b4b4"/><line x1="803" y1="64.5" x2="809" y2="64.5" stroke="#8a8a8a" stroke-width="0.9"/><line x1="803" y1="66.5" x2="809" y2="66.5" stroke="#8a8a8a" stroke-width="0.9"/><line x1="803" y1="68.5" x2="809" y2="68.5" stroke="#8a8a8a" stroke-width="0.9"/><line x1="803" y1="70.5" x2="809" y2="70.5" stroke="#8a8a8a" stroke-width="0.9"/><line x1="803" y1="72.5" x2="809" y2="72.5" stroke="#8a8a8a" stroke-width="0.9"/><line x1="803" y1="74.5" x2="809" y2="74.5" stroke="#8a8a8a" stroke-width="0.9"/><line x1="803" y1="76.5" x2="809" y2="76.5" stroke="#8a8a8a" stroke-width="0.9"/><line x1="803" y1="78.5" x2="809" y2="78.5" stroke="#8a8a8a" stroke-width="0.9"/><line x1="811" y1="64.5" x2="817" y2="64.5" stroke="#8a8a8a" stroke-width="0.9"/><line x1="811" y1="66.5" x2="817" y2="66.5" stroke="#8a8a8a" stroke-width="0.9"/><line x1="811" y1="68.5" x2="817" y2="68.5" stroke="#8a8a8a" stroke-width="0.9"/><line x1="811" y1="70.5" x2="817" y2="70.5" stroke="#8a8a8a" stroke-width="0.9"/><line x1="811" y1="72.5" x2="817" y2="72.5" stroke="#8a8a8a" stroke-width="0.9"/><line x1="811" y1="74.5" x2="817" y2="74.5" stroke="#8a8a8a" stroke-width="0.9"/><line x1="811" y1="76.5" x2="817" y2="76.5" stroke="#8a8a8a" stroke-width="0.9"/><line x1="811" y1="78.5" x2="817" y2="78.5" stroke="#8a8a8a" stroke-width="0.9"/><line x1="819" y1="64.5" x2="825" y2="64.5" stroke="#8a8a8a" stroke-width="0.9"/><line x1="819" y1="66.5" x2="825" y2="66.5" stroke="#8a8a8a" stroke-width="0.9"/><line x1="819" y1="68.5" x2="825" y2="68.5" stroke="#8a8a8a" stroke-width="0.9"/><line x1="819" y1="70.5" x2="825" y2="70.5" stroke="#8a8a8a" stroke-width="0.9"/><line x1="819" y1="72.5" x2="825" y2="72.5" stroke="#8a8a8a" stroke-width="0.9"/><line x1="819" y1="74.5" x2="825" y2="74.5" stroke="#8a8a8a" stroke-width="0.9"/><line x1="819" y1="76.5" x2="825" y2="76.5" stroke="#8a8a8a" stroke-width="0.9"/><line x1="819" y1="78.5" x2="825" y2="78.5" stroke="#8a8a8a" stroke-width="0.9"/><line x1="812" y1="85" x2="829.5" y2="68" stroke="#e6f0fb" stroke-width="5.5"/><line x1="813.5" y1="83.5" x2="829.5" y2="68" stroke="#9a9a9a" stroke-width="3.6"/><path d="M811 86.5 L812.5 81.5 L815.5 84.5 Z" fill="#9a9a9a"/><rect x="840.5" y="57.5" width="28.5" height="25" fill="#fff" stroke="#9e9e9e" stroke-width="1.2"/><rect x="840" y="57" width="29.5" height="5" fill="#a8a8a8"/><rect x="840" y="57" width="7" height="26" fill="#a8a8a8"/><line x1="854.5" y1="57" x2="854.5" y2="83" stroke="#9e9e9e" stroke-width="1"/><line x1="861.5" y1="57" x2="861.5" y2="83" stroke="#9e9e9e" stroke-width="1"/><rect x="849.5" y="59" width="3" height="1.2" fill="#fff"/><rect x="856.5" y="59" width="3" height="1.2" fill="#fff"/><rect x="863.5" y="59" width="3" height="1.2" fill="#fff"/><rect x="842" y="64.5" width="3" height="1.2" fill="#fff"/><rect x="842" y="69.5" width="3" height="1.2" fill="#fff"/><rect x="842" y="74.5" width="3" height="1.2" fill="#fff"/><rect x="842" y="79.5" width="3" height="1.2" fill="#fff"/><line x1="840" y1="67.5" x2="869" y2="67.5" stroke="#9e9e9e" stroke-width="1"/><line x1="840" y1="72.5" x2="869" y2="72.5" stroke="#9e9e9e" stroke-width="1"/><line x1="840" y1="77.5" x2="869" y2="77.5" stroke="#9e9e9e" stroke-width="1"/><rect x="857" y="72" width="15.5" height="15" fill="#9e9e9e" stroke="#eef4fb" stroke-width="0.8"/><rect x="859.5" y="74.5" width="10.5" height="5.5" fill="#fff"/><line x1="860.5" y1="76" x2="869" y2="76" stroke="#aaa" stroke-width="0.8"/><line x1="860.5" y1="78" x2="869" y2="78" stroke="#aaa" stroke-width="0.8"/><rect x="861" y="82" width="7.5" height="5" fill="#fff"/><rect x="862" y="83" width="2" height="4" fill="#9e9e9e"/><path d="M892.8 66.3 L895.5 64.4 L899.6 66.7 L907.1 59.1 L907.9 56.7 L909.9 55.2 L920.6 65.5 L919.8 67.1 L917.1 68.3 L909.9 75.5 L911.5 80.6 L909.1 82.5 Z" fill="#4cad84"/><path d="M888.9 86.9 L898.3 74.2 L901.8 77.6 Z" fill="#5c5c5c"/><defs><radialGradient id="pg" cx="0.4" cy="0.35" r="0.7"><stop offset="0" stop-color="#fff3a0"/><stop offset="0.5" stop-color="#ffc21a"/><stop offset="1" stop-color="#f08a00"/></radialGradient></defs><path d="M21.3 10.5 A7 7 0 1 0 21.3 20.5 L16 15.5 Z" fill="url(#pg)" stroke="#c85a00" stroke-width="0.9"/><ellipse cx="14.6" cy="12.8" rx="0.9" ry="1.7" fill="#222"/><circle cx="22.8" cy="15.2" r="2" fill="#e04020" stroke="#a02010" stroke-width="0.5"/></svg><div style="left:0px;top:0px;width:1071px;height:1px;background:#5a6464"></div><div style="left:0px;top:0px;width:1px;height:693px;background:#5a6464"></div><div style="left:1070px;top:0px;width:1px;height:693px;background:#7a7a7a"></div><div style="left:0px;top:692px;width:1071px;height:1px;background:#6d6d6d"></div></body></html>
